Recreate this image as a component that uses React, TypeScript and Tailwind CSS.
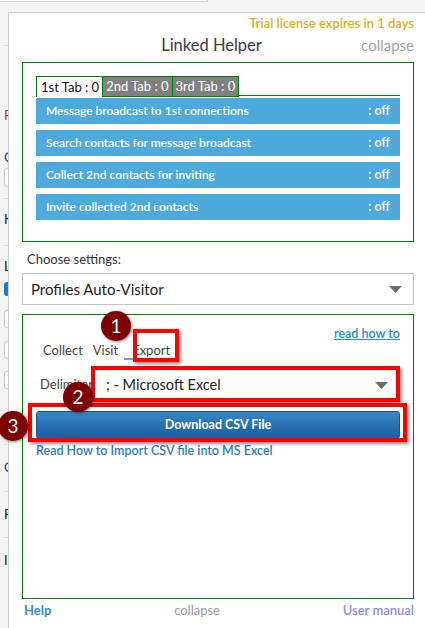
import { ReactNode } from 'react';

const tasks = [
  'Message broadcast to 1st connections',
  'Search contacts for message broadcast',
  'Collect 2nd contacts for inviting',
  'Invite collected 2nd contacts',
];

function Marker({ n, className }: { n: number; className: string }) {
  return (
    <div
      className={`absolute w-[30px] h-[30px] rounded-full bg-[#7f0000] text-white text-[19px] leading-[30px] text-center shadow-[1px_1px_3px_rgba(0,0,0,0.5)] ${className}`}
    >
      {n}
    </div>
  );
}

function RedBox({ className }: { className: string }) {
  return (
    <div
      className={`absolute border-[4px] border-[#ff0000] shadow-[2px_2px_3px_rgba(0,0,0,0.45)] ${className}`}
    />
  );
}

function Triangle() {
  return (
    <svg width="13" height="7" viewBox="0 0 13 7">
      <path d="M0 0 L13 0 L6.5 7 Z" fill="#6b6b6b" />
    </svg>
  );
}

function Tab({ children, active }: { children: ReactNode; active?: boolean }) {
  return (
    <div
      className={
        active
          ? 'h-[21px] pl-[4px] pr-[3px] border border-[#008000] border-b-0 bg-white text-[#1a0a2a] leading-[20px]'
          : 'h-[21px] pl-[3px] pr-[3px] border border-[#008000] border-l-0 bg-[#808080] text-white leading-[19px]'
      }
    >
      {children}
    </div>
  );
}

export default function App() {
  return (
    <div className="relative w-[425px] h-[628px] overflow-hidden bg-[#f3f3f3] font-['Lato','Open_Sans',sans-serif]">
      {/* page underneath the panel */}
      <div className="w-[208px] h-[2px] bg-white border-b border-r border-[#d6d6d6]" />
      <div className="flex flex-col pl-[4px] text-[13px] text-[#222]">
        <div className="h-[44px] border-b border-[#dcdcdc]" />
        <div className="h-[60px]" />
        <div className="text-[#c0392b] h-[24px]">F</div>
        <div className="h-[18px]" />
        <div className="text-[#1f3b70] h-[20px]">C</div>
        <div className="w-[30px] h-[19px] border border-[#c8c8c8] rounded-[3px] bg-white" />
        <div className="h-[12px] border-b border-[#dcdcdc]" />
        <div className="h-[26px] leading-[40px]">K</div>
        <div className="h-[21px] border-b border-[#dcdcdc]" />
        <div className="h-[26px] leading-[40px]">L</div>
        <div className="w-[20px] h-[14px] mt-[10px] rounded-[3px] bg-[#1d7fc2]" />
        <div className="w-[20px] h-[18px] mt-[14px] rounded-[3px] border border-[#c8c8c8] bg-white" />
        <div className="w-[20px] h-[18px] mt-[13px] rounded-[3px] border border-[#c8c8c8] bg-white" />
        <div className="w-[20px] h-[18px] mt-[12px] rounded-[3px] border border-[#c8c8c8] bg-white" />
        <div className="h-[56px] border-b border-[#dcdcdc]" />
        <div className="h-[46px] leading-[44px] text-[#1f3b70]">C</div>
        <div className="h-[46px] leading-[44px] border-t border-[#dcdcdc]">F</div>
        <div className="h-[46px] leading-[44px] border-t border-[#dcdcdc]">I</div>
      </div>

      {/* Linked Helper panel */}
      <div className="absolute left-[8px] top-[12px] right-0 bottom-[-40px] bg-white border-l border-t border-[#cfcfcf] pl-[13px] pr-[11px] pt-[2px] flex flex-col">
        <div className="text-right text-[13px] leading-[16px] font-semibold text-[#dcae1d]">
          Trial license expires in 1 days
        </div>
        <div className="grid grid-cols-[1fr_auto_1fr] items-center mt-[2px] h-[20px] -ml-[13px]">
          <div />
          <div className="text-[16.5px] text-[#3a3a48]">Linked Helper</div>
          <div className="text-right text-[15px] text-[#a3a3a3]">collapse</div>
        </div>

        <div className="mt-[9px] h-[180px] border border-[#008000] px-[13px] pt-[13px]">
          <div className="flex text-[13px]">
            <Tab active>1st Tab : 0</Tab>
            <Tab>2nd Tab : 0</Tab>
            <Tab>3rd Tab : 0</Tab>
            <div className="flex-1 border-b border-[#008000] h-[20px]" />
          </div>
          <div className="flex flex-col gap-[6px] mt-[1px]">
            {tasks.map((t) => (
              <div
                key={t}
                className="h-[26px] bg-[#4eaadd] text-white text-[12px] font-semibold flex items-center justify-between px-[10px]"
              >
                <span>{t}</span>
                <span className="text-[12.5px]">: off</span>
              </div>
            ))}
          </div>
        </div>

        <div className="mt-[9px] ml-[5px] text-[13px] leading-[16px] text-[#333]">Choose settings:</div>
        <div className="mt-[6px] h-[32px] border border-[#c4c4c4] flex items-center justify-between pl-[8px] pr-[11px]">
          <span className="text-[15px] text-[#1e1e1e]">Profiles Auto-Visitor</span>
          <Triangle />
        </div>

        <div className="mt-[9px] h-[285px] border border-[#008000] flex flex-col">
          <div className="flex justify-end pr-[13px] pt-[11px]">
            <span className="text-[12.5px] leading-[16px] text-[#2a88cf] underline font-semibold">read how to</span>
          </div>
          <div className="flex ml-[15px] text-[13px] text-[#444]">
            <span className="px-[5px] h-[18px] leading-[16px]">Collect</span>
            <span className="pl-[5px] pr-[6px] h-[18px] leading-[16px]">Visit</span>
            <span className="px-[8px] h-[18px] leading-[16px] border-b-2 border-[#4eaadd]">Export</span>
          </div>
          <div className="flex items-center mt-[11px] ml-[17px] mr-[18px]">
            <span className="text-[13px] text-[#444] w-[58px]">Delimiter:</span>
            <div className="flex-1 h-[28px] bg-white flex items-center justify-between pl-[8px] pr-[7px]">
              <span className="text-[14.5px] text-[#222]">; - Microsoft Excel</span>
              <Triangle />
            </div>
          </div>
          <div className="mx-[13px] mt-[12px] h-[28px] rounded-[3px] border border-[#1c5288] bg-gradient-to-b from-[#3488c8] to-[#1f5d9c] text-white text-[12.5px] font-bold flex items-center justify-center">
            Download CSV File
          </div>
          <div className="ml-[13px] mt-[4px] text-[12.5px] leading-[15px] font-semibold text-[#2a7cc2]">
            Read How to Import CSV file into MS Excel
          </div>
        </div>

        <div className="flex items-center justify-between mt-[4px] text-[13px] h-[16px] pl-[2px]">
          <span className="font-bold text-[#3a8ad8]">Help</span>
          <span className="text-[#9a9a9a]">collapse</span>
          <span className="font-semibold text-[#8f89ea]">User manual</span>
        </div>
      </div>

      {/* annotations */}
      <RedBox className="left-[133px] top-[329px] w-[46px] h-[33px]" />
      <RedBox className="left-[91px] top-[366px] w-[309px] h-[36px]" />
      <RedBox className="left-[28px] top-[403px] w-[379px] h-[39px]" />
      <Marker n={1} className="left-[101px] top-[311px]" />
      <Marker n={2} className="left-[63px] top-[382px]" />
      <Marker n={3} className="left-[-2px] top-[411px]" />
    </div>
  );
}
